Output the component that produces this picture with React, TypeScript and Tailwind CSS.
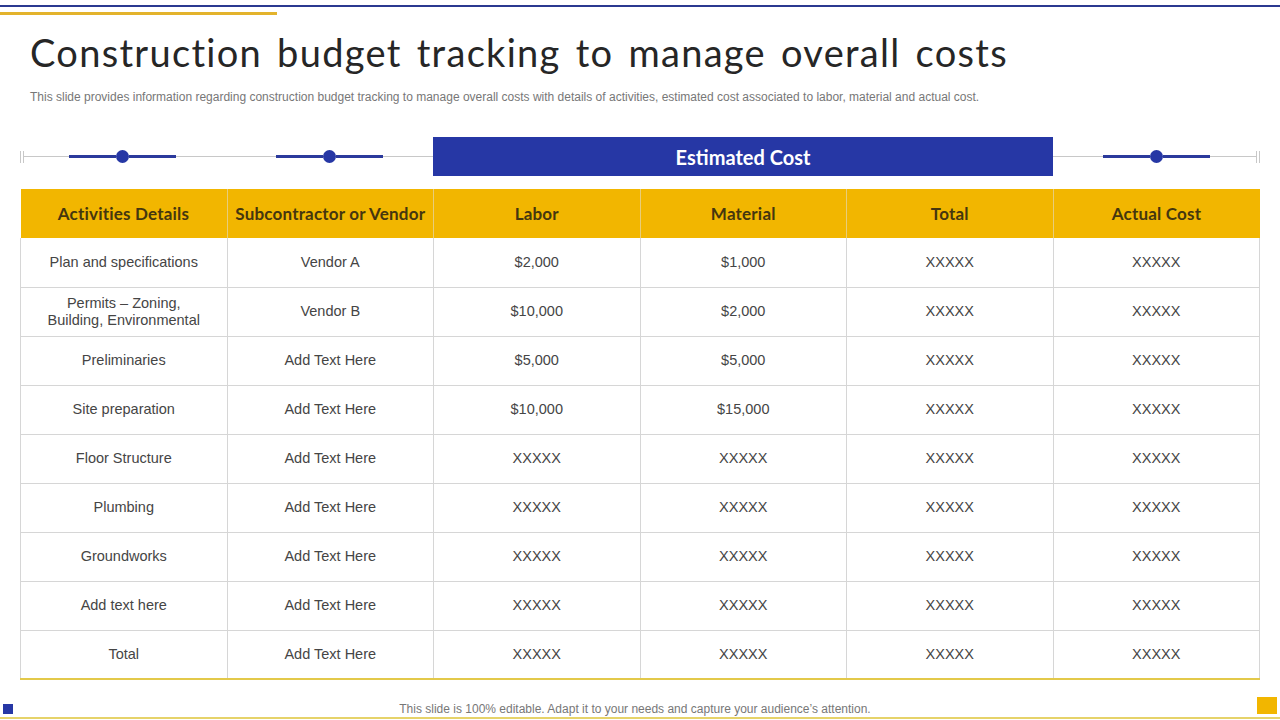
import React from "react";

const rows: string[][] = [
  ["Plan and specifications", "Vendor A", "$2,000", "$1,000", "XXXXX", "XXXXX"],
  ["Permits – Zoning,\nBuilding, Environmental", "Vendor B", "$10,000", "$2,000", "XXXXX", "XXXXX"],
  ["Preliminaries", "Add Text Here", "$5,000", "$5,000", "XXXXX", "XXXXX"],
  ["Site preparation", "Add Text Here", "$10,000", "$15,000", "XXXXX", "XXXXX"],
  ["Floor Structure", "Add Text Here", "XXXXX", "XXXXX", "XXXXX", "XXXXX"],
  ["Plumbing", "Add Text Here", "XXXXX", "XXXXX", "XXXXX", "XXXXX"],
  ["Groundworks", "Add Text Here", "XXXXX", "XXXXX", "XXXXX", "XXXXX"],
  ["Add text here", "Add Text Here", "XXXXX", "XXXXX", "XXXXX", "XXXXX"],
  ["Total", "Add Text Here", "XXXXX", "XXXXX", "XXXXX", "XXXXX"],
];

const headers = ["Activities Details", "Subcontractor or Vendor", "Labor", "Material", "Total", "Actual Cost"];

function Seg() {
  return (
    <div className="flex items-center w-[107px]">
      <div className="flex-1 h-[3px] bg-[#2b3a9c]" />
      <div className="w-[13px] h-[13px] rounded-full bg-[#2637a5]" />
      <div className="flex-1 h-[3px] bg-[#2b3a9c]" />
    </div>
  );
}

function Grey({ w }: { w?: string }) {
  return <div className={`h-px bg-[#c8c8c8] ${w ?? "flex-1"}`} />;
}

function Ticks() {
  return (
    <div className="flex items-center gap-[2px]">
      <div className="w-px h-[12px] bg-[#c8c8c8]" />
      <div className="w-px h-[12px] bg-[#c8c8c8]" />
    </div>
  );
}

export default function App() {
  return (
    <div className="w-[1280px] h-[720px] bg-white overflow-hidden flex flex-col" style={{ fontFamily: "'Liberation Sans', Arial, sans-serif" }}>
      <div className="h-[5px]" />
      <div className="h-[2px] bg-[#2b3990]" />
      <div className="h-[5px]" />
      <div className="h-[3px] w-[277px] bg-[#e3b32c]" />

      <h1 className="mt-[14px] pl-[30px] text-[38px] leading-[46px] font-normal text-[#262626] tracking-[1.3px] whitespace-nowrap" style={{ fontFamily: "'Lato', sans-serif", wordSpacing: "4px" }}>
        Construction budget tracking to manage overall costs
      </h1>
      <p className="mt-[14px] pl-[30px] text-[12px] leading-[16px] text-[#777] whitespace-nowrap">
        This slide provides information regarding construction budget tracking to manage overall costs with details of activities, estimated cost associated to labor, material and actual cost.
      </p>

      <div className="mt-[32px] mx-[20px] h-[39px] flex items-center">
        <div className="flex items-center w-[413px]">
          <Ticks />
          <Grey />
          <Seg />
          <Grey w="w-[100px]" />
          <Seg />
          <Grey w="w-[50px]" />
        </div>
        <div className="w-[620px] h-[39px] bg-[#2637a5] flex items-center justify-center text-white text-[20px] font-bold" style={{ fontFamily: "'Lato', sans-serif" }}>
          Estimated Cost
        </div>
        <div className="flex items-center flex-1">
          <Grey w="w-[50px]" />
          <Seg />
          <Grey />
          <Ticks />
        </div>
      </div>

      <div className="mt-[13px] mx-[20px]">
        <table className="w-[1240px] table-fixed border-collapse">
          <thead>
            <tr className="h-[49px] bg-[#f2b600]">
              {headers.map((h, i) => (
                <th
                  key={h}
                  className={`text-[17px] font-bold text-[#45360f] tracking-[0.2px] text-center p-0 ${i > 0 ? "border-l border-[#e8cd7a]" : ""}`}
                  style={{ fontFamily: "'Lato', sans-serif" }}
                >
                  {h}
                </th>
              ))}
            </tr>
          </thead>
          <tbody>
            {rows.map((r, ri) => (
              <tr key={ri} className={`h-[49px] ${ri === rows.length - 1 ? "border-b-2 border-b-[#e3c94a]" : "border-b border-b-[#d6d6d6]"}`}>
                {r.map((c, ci) => (
                  <td
                    key={ci}
                    className={`text-center p-0 text-[14.5px] leading-[17px] text-[#454545] border-l border-[#d6d6d6] ${ci === 5 ? "border-r" : ""} whitespace-pre-line`}
                  >
                    {c}
                  </td>
                ))}
              </tr>
            ))}
          </tbody>
        </table>
      </div>

      <div className="flex-1 flex items-end">
        <div className="w-full flex items-end pb-[3px]">
          <div className="ml-[3px] w-[10px] h-[10px] bg-[#2637a5]" />
          <div className="flex-1 text-center text-[12px] leading-[14px] text-[#777] -mb-[2px]">
            This slide is 100% editable. Adapt it to your needs and capture your audience’s attention.
          </div>
          <div className="mr-[3px] w-[20px] h-[17px] bg-[#f2b600]" />
        </div>
      </div>
      <div className="h-[2px] bg-[#e6d36a] shrink-0" />
      <div className="h-px shrink-0" />
    </div>
  );
}
